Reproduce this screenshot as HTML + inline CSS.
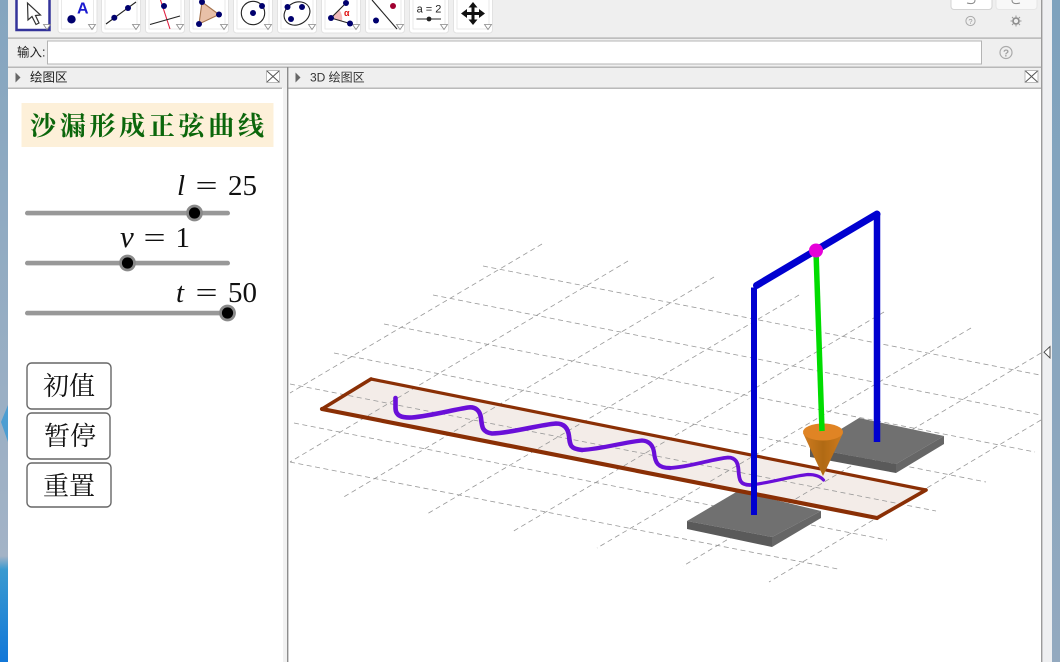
<!DOCTYPE html>
<html lang="zh"><head><meta charset="utf-8"><title>沙漏形成正弦曲线</title>
<style>
html,body{margin:0;padding:0;width:1060px;height:662px;overflow:hidden;background:#fff}
svg{display:block;position:absolute;left:0;top:0}
.ui{font-family:"Liberation Sans","Noto Sans CJK SC",sans-serif;font-size:12.5px;fill:#222}
.m{font-family:"Liberation Serif","Noto Serif CJK SC",serif;font-size:29px;fill:#111}
.b{font-family:"Liberation Serif","Noto Serif CJK SC",serif;font-size:26px;fill:#111;letter-spacing:0}
</style></head><body>
<svg width="1060" height="662" viewBox="0 0 1060 662" xmlns="http://www.w3.org/2000/svg">
<defs>
<linearGradient id="lb" x1="0" y1="0" x2="0" y2="1">
<stop offset="0" stop-color="#84a5bf"/><stop offset=".6" stop-color="#9aafc4"/><stop offset=".84" stop-color="#a3b3c6"/><stop offset=".86" stop-color="#3a9ad0"/><stop offset="1" stop-color="#1277d8"/>
</linearGradient>
<linearGradient id="rb" x1="0" y1="0" x2="0" y2="1"><stop offset="0" stop-color="#7ea2bd"/><stop offset="1" stop-color="#93a9bf"/></linearGradient>
<linearGradient id="cone" x1="0" y1="0" x2="1" y2="0"><stop offset="0" stop-color="#d07c20"/><stop offset=".5" stop-color="#b06a14"/><stop offset="1" stop-color="#cf7a1c"/></linearGradient>
<g id="tri"><path d="M-3.500 -2.500H3.500L0 2.500Z" fill="#fff" stroke="#888" stroke-width=".8"/></g>
<g id="btn"><rect x=".5" y="-5" width="39" height="38" rx="3" fill="#fff" stroke="#e2e2e2"/><path d="M4 -5V29H36V-5" fill="none" stroke="#e4e4e4" stroke-width=".8"/></g>
</defs>

<!-- desktop behind -->
<rect x="0" y="0" width="8" height="662" fill="url(#lb)"/>
<path d="M8 405L1 422L8 442Z" fill="#4d9ed2"/>
<rect x="1052" y="0" width="8" height="662" fill="url(#rb)"/>

<!-- window chrome -->
<rect x="8" y="0" width="1033" height="88" fill="#efefef"/>
<rect x="1041" y="0" width="11" height="662" fill="#eeeff1"/>
<rect x="1041" y="0" width="1.4" height="662" fill="#9a9a9a"/>
<rect x="8" y="37.500" width="1033" height="1.2" fill="#aaa"/>
<rect x="8" y="66.600" width="1033" height="1.2" fill="#aaa"/>
<rect x="8" y="87.600" width="274" height="1.2" fill="#aaa"/>
<rect x="288" y="87.600" width="753" height="1.2" fill="#aaa"/>
<rect x="283" y="88" width="4" height="574" fill="#f1f1f1"/>
<rect x="287" y="67" width="1.4" height="595" fill="#8d8d8d"/>

<!-- toolbar -->
<rect x="16.500" y="-4" width="33" height="34" fill="#fff" stroke="#33339a" stroke-width="2.500"/>
<path d="M27.500 3L28 20L32 16.500L36 24.500L39 23L35.500 15.500L40.500 15Z" fill="#fff" stroke="#333" stroke-width="1.200"/>
<use href="#tri" x="47" y="27"/>
<g transform="translate(57.500,0)"><use href="#btn"/></g>
<g transform="translate(101,0)"><use href="#btn"/></g>
<g transform="translate(145,0)"><use href="#btn"/></g>
<g transform="translate(189,0)"><use href="#btn"/></g>
<g transform="translate(233,0)"><use href="#btn"/></g>
<g transform="translate(277,0)"><use href="#btn"/></g>
<g transform="translate(321,0)"><use href="#btn"/></g>
<g transform="translate(365,0)"><use href="#btn"/></g>
<g transform="translate(409,0)"><use href="#btn"/></g>
<g transform="translate(453,0)"><use href="#btn"/></g>
<use href="#tri" x="92" y="27"/><use href="#tri" x="136" y="27"/><use href="#tri" x="180" y="27"/><use href="#tri" x="224" y="27"/><use href="#tri" x="268" y="27"/><use href="#tri" x="312" y="27"/><use href="#tri" x="356" y="27"/><use href="#tri" x="400" y="27"/><use href="#tri" x="444" y="27"/><use href="#tri" x="488" y="27"/>
<circle cx="71.500" cy="19.300" r="4.200" fill="#00006e"/>
<text x="77" y="13.500" font-family="Liberation Sans" font-weight="bold" font-size="16" fill="#1a1ad0">A</text>
<path d="M106 24L136 2" stroke="#222" stroke-width="1.100" fill="none"/><circle cx="114.300" cy="17.800" r="3" fill="#00006e"/><circle cx="128" cy="8" r="3" fill="#00006e"/>
<path d="M160.500 0L170 29" stroke="#e02040" stroke-width="1.100" fill="none"/><path d="M150 24.500L180 16" stroke="#222" stroke-width="1.100" fill="none"/><circle cx="164" cy="6" r="3" fill="#00006e"/>
<path d="M202 2L219 14.500L199 24Z" fill="#e8c0a8" stroke="#a5734e" stroke-width="1.100"/><circle cx="202" cy="2" r="3" fill="#00006e"/><circle cx="219" cy="14.500" r="3" fill="#00006e"/><circle cx="199" cy="24" r="3" fill="#00006e"/>
<circle cx="253" cy="13" r="11.700" fill="none" stroke="#222" stroke-width="1.100"/><circle cx="253" cy="13" r="3" fill="#00006e"/><circle cx="262" cy="6" r="3" fill="#00006e"/>
<ellipse cx="297" cy="13.500" rx="13.500" ry="11" transform="rotate(-30 297 13.500)" fill="none" stroke="#222" stroke-width="1.100"/><circle cx="287.500" cy="7" r="3" fill="#00006e"/><circle cx="302" cy="7" r="3" fill="#00006e"/><circle cx="291" cy="19" r="3" fill="#00006e"/>
<path d="M331 18L339.500 10Q343 15 342 21Z" fill="#f2bcbc"/><path d="M346 3L331 18L350 23.500" fill="none" stroke="#222" stroke-width="1.100"/><circle cx="331" cy="18" r="3" fill="#00006e"/><circle cx="346" cy="3" r="3" fill="#00006e"/><circle cx="350" cy="23.500" r="3" fill="#00006e"/>
<text x="344" y="16" font-family="Liberation Sans" font-size="9" font-weight="bold" fill="#e01010">α</text>
<path d="M372 0L397 29" stroke="#222" stroke-width="1.100" fill="none"/><circle cx="376" cy="20.500" r="3" fill="#00006e"/><circle cx="393" cy="6" r="3" fill="#a00030"/>
<text x="429" y="12.500" text-anchor="middle" font-family="Liberation Sans" font-size="11" fill="#222">a = 2</text>
<path d="M416.500 19H441" stroke="#555" stroke-width="1.200"/><circle cx="429" cy="19" r="2.400" fill="#222"/>
<path d="M473 2L477.500 7.500H474.500V12H479V9L485 13.500L479 18V15H474.500V19.500H477.500L473 25L468.500 19.500H471.500V15H467V18L461 13.500L467 9V12H471.500V7.500H468.500Z" fill="#111"/>

<rect x="951" y="-3" width="41" height="12.500" rx="3" fill="#fff" stroke="#d4d4d4"/>
<rect x="996" y="-3" width="41" height="12.500" rx="3" fill="#f8f8f8" stroke="#e6e6e6"/>
<path d="M967 3Q975 5 975 0" fill="none" stroke="#888"/><path d="M1020 3Q1012 5 1012 0" fill="none" stroke="#888"/>
<circle cx="970.500" cy="21" r="4.600" fill="none" stroke="#aaa"/><text x="970.500" y="24" text-anchor="middle" font-family="Liberation Sans" font-size="7.500" fill="#999">?</text>
<circle cx="1016" cy="21" r="3" fill="none" stroke="#888" stroke-width="1.600"/><path d="M1016 15.500V26.500M1010.500 21H1021.500M1012 17L1020 25M1020 17L1012 25" stroke="#999" stroke-width="1"/><circle cx="1016" cy="21" r="2" fill="#efefef"/>

<!-- input row -->
<text class="ui" x="17" y="56.500">输入:</text>
<rect x="47.500" y="41" width="934" height="23" fill="#fff" stroke="#b4b4b4"/>
<circle cx="1006" cy="52.500" r="6" fill="none" stroke="#aaa" stroke-width="1.200"/><text x="1006" y="56.500" text-anchor="middle" font-family="Liberation Sans" font-size="10" font-weight="bold" fill="#a0a0a0">?</text>

<!-- panel headers -->
<path d="M15.500 72.500L20.500 77.500L15.500 82.500Z" fill="#666"/>
<text class="ui" x="30" y="81.500">绘图区</text>
<rect x="266.500" y="70.500" width="13" height="12" fill="#fff" stroke="#bbb"/><path d="M267 71L279 82M279 71L267 82" stroke="#555" stroke-width="1" fill="none"/>
<path d="M295.500 72.500L300.500 77.500L295.500 82.500Z" fill="#666"/>
<text class="ui" x="310" y="81.500" style="font-size:12px;fill:#333">3D 绘图区</text>
<rect x="1025" y="70.500" width="13" height="12" fill="#fff" stroke="#bbb"/><path d="M1025.500 71L1037.500 82M1037.500 71L1025.500 82" stroke="#555" stroke-width="1" fill="none"/>
<path d="M1050 346.500V358L1044 352.200Z" fill="#fff" stroke="#444" stroke-width=".9"/>

<!-- left panel -->
<rect x="21.500" y="103" width="252" height="44" fill="#fdf0d9"/>
<text x="30" y="135" font-family="'Liberation Serif','Noto Serif CJK SC',serif" font-weight="bold" font-size="26" fill="#0b660b" textLength="234">沙漏形成正弦曲线</text>

<text class="m" x="177" y="195" font-style="italic">l</text><text class="m" transform="translate(195.500,195) scale(1.35,1)">=</text><text class="m" x="228" y="195">25</text>
<rect x="25" y="210.800" width="205" height="4.600" rx="2.300" fill="#989898"/>
<circle cx="194.500" cy="213" r="8.400" fill="#8a8a8a"/><circle cx="194.500" cy="213" r="5.600" fill="#000"/>
<text class="m" x="120" y="247" font-style="italic" style="font-size:31px">v</text><text class="m" transform="translate(143.500,247) scale(1.35,1)">=</text><text class="m" x="175.500" y="247">1</text>
<rect x="25" y="260.800" width="205" height="4.600" rx="2.300" fill="#989898"/>
<circle cx="127.500" cy="263" r="8.400" fill="#8a8a8a"/><circle cx="127.500" cy="263" r="5.600" fill="#000"/>
<text class="m" x="176" y="302" font-style="italic">t</text><text class="m" transform="translate(195.500,302) scale(1.35,1)">=</text><text class="m" x="228" y="302">50</text>
<rect x="25" y="310.800" width="205" height="4.600" rx="2.300" fill="#989898"/>
<circle cx="227.500" cy="313" r="8.400" fill="#8a8a8a"/><circle cx="227.500" cy="313" r="5.600" fill="#000"/>

<rect x="27" y="363" width="84" height="46" rx="4.500" fill="#fff" stroke="#666" stroke-width="1.400"/>
<text class="b" x="43" y="395">初值</text>
<rect x="27" y="413" width="83" height="46" rx="4.500" fill="#fff" stroke="#666" stroke-width="1.400"/>
<text class="b" x="44" y="445">暂停</text>
<rect x="27" y="463" width="84" height="44" rx="4.500" fill="#fff" stroke="#666" stroke-width="1.400"/>
<text class="b" x="43" y="495">重置</text>

<!-- strip fill -->
<path d="M322 409L371 379L926 490L877 518Z" fill="#f3ece8"/>

<!-- 3D view grid -->
<g fill="none" stroke="#999" stroke-width=".8" stroke-dasharray="5 3.500">
<path d="M542 244L290 393"/><path d="M628 261L290 462"/><path d="M714 277L342 498"/><path d="M799 295L427 514"/><path d="M884 312L512 532"/><path d="M971 328L597 548"/><path d="M1041 353L683 566"/><path d="M1041 420L769 582"/>
<path d="M483 266L1040 375"/><path d="M433 295L1041 415"/><path d="M384 324L1035 452"/><path d="M334 353L986 482"/><path d="M290 384L936 511"/><path d="M294 423L887 540"/><path d="M290 462L838 569"/>
</g>

<!-- right base -->
<path d="M810 448L859 418L944 436L896 464Z" fill="#707070"/>
<path d="M810 448L896 464V473L810 457Z" fill="#5a5a5a"/>
<path d="M896 464L944 436V444L896 473Z" fill="#666"/>
<!-- left base -->
<path d="M687 521L738 491L821 511L772 537Z" fill="#707070"/>
<path d="M687 521L772 537V547L687 529Z" fill="#5a5a5a"/>
<path d="M772 537L821 511V518L772 547Z" fill="#666"/>

<!-- strip edges -->
<g fill="none" stroke="#8a2f05" stroke-linecap="round">
<path d="M371 379L926 490" stroke-width="3.200"/>
<path d="M926 490L877 518" stroke-width="3.600"/>
<path d="M322 409L877 518" stroke-width="4.200"/>
<path d="M322 409L371 379" stroke-width="3.600"/>
</g>

<!-- post back -->
<path d="M877 214V442" stroke="#0000d0" stroke-width="6.500" fill="none"/>

<!-- sine curve -->
<g fill="none" stroke="#6a0fd8" stroke-linecap="round" stroke-linejoin="round">
<path d="M395.500 398V408C395.500 416 402 418 412 417.500C432 415.500 452 410 468 407.500C476 406.500 480 411 481 418C482 427 482 432 492 433.500C512 433 538 425 556 423.500C564 423.500 568 428 569 436C570 445 570 449 582 450" stroke-width="4.600"/>
<path d="M582 450C602 449 625 442 642 440.500C650 441 653 446 654 452C655 463 658 468 670 468" stroke-width="4.200"/>
<path d="M670 468C690 467 712 459 728 457.500C736 457.500 738 463 738.500 470C739 480 740 485 750 485" stroke-width="3.800"/>
<path d="M750 485C770 483 792 476 808 474.500C815 474.500 820 476 823.500 480" stroke-width="3.200"/>
</g>

<!-- front post + top bar -->
<path d="M754 287.500V515" stroke="#0000d0" stroke-width="6" fill="none"/>
<path d="M756.500 285.500L877 214" stroke="#0000d0" stroke-width="7" fill="none" stroke-linecap="round"/>

<!-- cone -->
<path d="M803 433L823 476L843 433Z" fill="url(#cone)"/>
<ellipse cx="823" cy="432" rx="20" ry="8.500" fill="#e08424"/>
<!-- string -->
<path d="M816 251L822 431" stroke="#00dc00" stroke-width="5.500" fill="none"/>
<circle cx="816" cy="250.500" r="7" fill="#e600d8"/>
</svg>
</body></html>
